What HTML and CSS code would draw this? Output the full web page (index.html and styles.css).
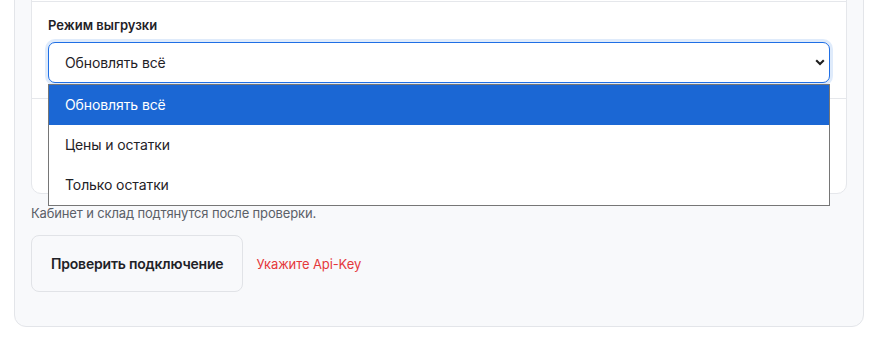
FILE: index.html
```html
<!DOCTYPE html>
<html lang="ru">
<head>
    <meta charset="UTF-8">
    <meta name="viewport" content="width=device-width, initial-scale=1.0">
    <title>Настройки выгрузки</title>
    <link rel="stylesheet" href="styles.css">
</head>
<body>
    <div class="panel">
        <div class="card">
            <div class="card-section card-section-prev"></div>

            <div class="card-section">
                <label class="field-label" for="mode">Режим выгрузки</label>
                <div class="select-wrap">
                    <select class="select" id="mode">
                        <option selected>Обновлять всё</option>
                        <option>Цены и остатки</option>
                        <option>Только остатки</option>
                    </select>
                    <svg class="select-arrow" width="10" height="7" viewBox="0 0 10 7">
                        <path d="M1.2 1.3 L5 5 L8.8 1.3" fill="none" stroke="#1f1f1f" stroke-width="2.1"/>
                    </svg>

                    <!-- открытый список -->
                    <ul class="dropdown">
                        <li class="dropdown-item active">Обновлять всё</li>
                        <li class="dropdown-item">Цены и остатки</li>
                        <li class="dropdown-item">Только остатки</li>
                    </ul>
                </div>
            </div>

            <div class="card-section card-section-next"></div>
        </div>

        <p class="hint">Кабинет и склад подтянутся после проверки.</p>

        <div class="actions">
            <button class="btn">Проверить подключение</button>
            <span class="error">Укажите Api-Key</span>
        </div>
    </div>
</body>
</html>
```

FILE: styles.css
```css
* {
    margin: 0;
    padding: 0;
    box-sizing: border-box;
}

body {
    background: #fff;
    color: #1f2227;
    font-family: 'Inter', 'Noto Sans', sans-serif;
    padding: 0 14px;
    overflow: hidden;
}

.panel {
    margin-top: -41px;
    background: #f8f9fb;
    border: 1px solid #e3e5e9;
    border-radius: 12px;
    padding: 16px 16px 34px;
}

.card {
    background: #fff;
    border: 1px solid #e5e7eb;
    border-radius: 10px;
}

.card-section {
    padding: 14px 16px 15px;
    border-bottom: 1px solid #e5e7eb;
}

.card-section:last-child {
    border-bottom: none;
}

.card-section-prev {
    height: 25px;
    padding: 0;
}

.card-section-next {
    height: 94px;
}

.field-label {
    display: block;
    font-size: 13px;
    font-weight: 600;
    line-height: 18px;
    margin-bottom: 8px;
}

.select-wrap {
    position: relative;
}

.select {
    display: block;
    width: 100%;
    height: 41px;
    appearance: none;
    -webkit-appearance: none;
    background: #fff;
    border: 1px solid #1f6fe5;
    border-radius: 7px;
    box-shadow: 0 0 0 3px rgba(31, 111, 229, 0.14);
    padding: 0 40px 0 16px;
    font-family: inherit;
    font-size: 14px;
    letter-spacing: -0.1px;
    color: #1f2227;
    outline: none;
}

.select-arrow {
    position: absolute;
    right: 5px;
    top: 17px;
}

.dropdown {
    position: absolute;
    top: 42px;
    left: 0;
    right: 0;
    list-style: none;
    background: #fff;
    border: 1px solid #767676;
    z-index: 2;
}

.dropdown-item {
    height: 40px;
    line-height: 40px;
    padding-left: 16px;
    font-size: 14px;
    letter-spacing: -0.1px;
    color: #1f2227;
}

.dropdown-item.active {
    background: #1b67d4;
    color: #fff;
}

.hint {
    font-size: 13px;
    line-height: 18px;
    letter-spacing: -0.15px;
    color: #5b6068;
    margin-top: 10px;
}

.actions {
    display: flex;
    align-items: center;
    gap: 13px;
    margin-top: 13px;
}

.btn {
    height: 57px;
    padding: 0 19px;
    background: #f8f9fb;
    border: 1px solid #e1e3e7;
    border-radius: 8px;
    font-family: inherit;
    font-size: 14px;
    font-weight: 600;
    letter-spacing: -0.2px;
    color: #1f2227;
    cursor: pointer;
}

.error {
    font-size: 13px;
    letter-spacing: -0.1px;
    color: #e5383b;
}
```
